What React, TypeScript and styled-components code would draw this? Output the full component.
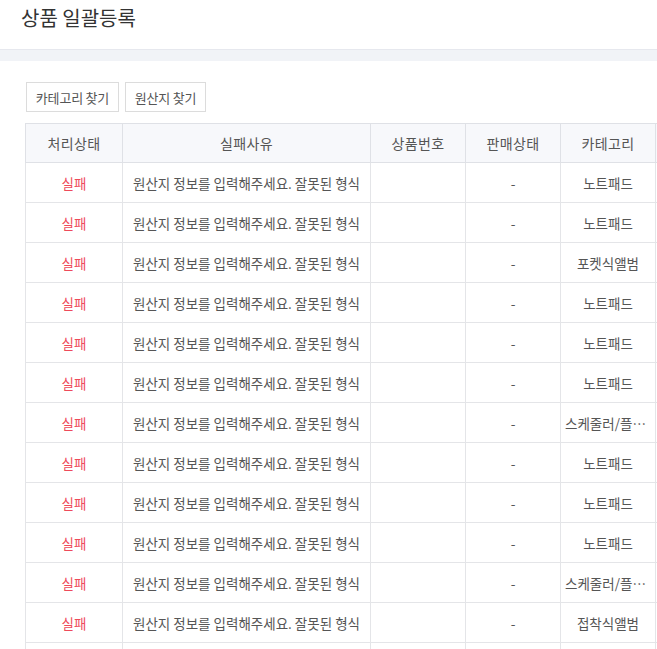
import React from "react";
import styled, { createGlobalStyle } from "styled-components";

const Global = createGlobalStyle`
  html, body { margin: 0; padding: 0; background: #fff; overflow: hidden; }
  body { font-family: "Noto Sans CJK KR", "Noto Sans", sans-serif; color: #555; }
`;

const Page = styled.div`
  width: 100%;
  height: 649px;
  overflow: hidden;
`;

const Header = styled.div`
  height: 49px;
  padding-left: 21px;
  display: flex;
  align-items: flex-start;
`;

const Title = styled.h1`
  margin: 0;
  padding-top: 4px;
  font-size: 20px;
  font-weight: 400;
  color: #333;
  line-height: 28px;
`;

const Band = styled.div`
  height: 11px;
  background: #f1f3f7;
  border-top: 1px solid #e6e8ee;
`;

const Content = styled.div`
  padding: 21px 0 0 25px;
`;

const Toolbar = styled.div`
  display: flex;
  gap: 6px;
  margin-left: 1px;
  margin-bottom: 11px;
`;

const Button = styled.button<{ $w: number }>`
  width: ${(p) => p.$w}px;
  height: 30px;
  padding: 0;
  border: 1px solid #dcdcdc;
  background: #fff;
  font-family: inherit;
  font-size: 13px;
  color: #555;
  letter-spacing: -0.2px;
`;

const Table = styled.table`
  border-collapse: collapse;
  table-layout: fixed;
  width: 900px;
  font-size: 13.5px;
`;

const Th = styled.th<{ $w: number }>`
  width: ${(p) => p.$w}px;
  height: 38px;
  padding: 0;
  background: #f7f8fb;
  border: 1px solid #dfe1e6;
  font-weight: 400;
  color: #555;
  font-size: 14px;
  letter-spacing: 0.4px;
  text-align: center;
`;

const Td = styled.td<{ $align?: string; $red?: boolean; $pad?: number }>`
  height: 39px;
  padding: 0 ${(p) => (p.$pad ?? 10)}px;
  border: 1px solid #e4e5e8;
  text-align: ${(p) => p.$align || "center"};
  color: ${(p) => (p.$red ? "#ee4a5a" : "#555")};
  white-space: nowrap;
  overflow: hidden;
  text-overflow: ellipsis;
`;

const categories = [
  "노트패드",
  "노트패드",
  "포켓식앨범",
  "노트패드",
  "노트패드",
  "노트패드",
  "스케줄러/플래너",
  "노트패드",
  "노트패드",
  "노트패드",
  "스케줄러/플래너",
  "접착식앨범",
];

export default function App() {
  return (
    <Page>
      <Global />
      <Header>
        <Title>상품 일괄등록</Title>
      </Header>
      <Band />
      <Content>
        <Toolbar>
          <Button $w={93}>카테고리 찾기</Button>
          <Button $w={81}>원산지 찾기</Button>
        </Toolbar>
        <Table>
          <thead>
            <tr>
              <Th $w={96}>처리상태</Th>
              <Th $w={247}>실패사유</Th>
              <Th $w={94}>상품번호</Th>
              <Th $w={94}>판매상태</Th>
              <Th $w={94}>카테고리</Th>
              <Th $w={270}></Th>
            </tr>
          </thead>
          <tbody>
            {categories.map((c, i) => (
              <tr key={i}>
                <Td $red>실패</Td>
                <Td $align="left">원산지 정보를 입력해주세요. 잘못된 형식</Td>
                <Td></Td>
                <Td>-</Td>
                <Td $pad={4}>{c}</Td>
                <Td></Td>
              </tr>
            ))}
            <tr>
              <Td></Td>
              <Td></Td>
              <Td></Td>
              <Td></Td>
              <Td></Td>
              <Td></Td>
            </tr>
          </tbody>
        </Table>
      </Content>
    </Page>
  );
}
